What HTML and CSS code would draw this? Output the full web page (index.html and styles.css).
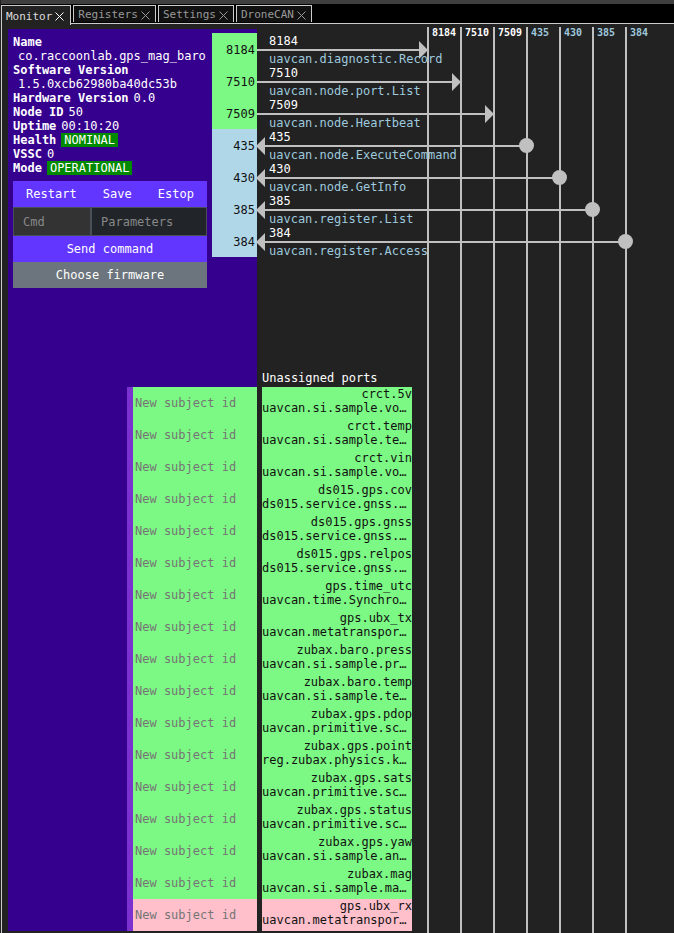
FILE: index.html
```html
<!DOCTYPE html>
<html lang="en">
<head>
<meta charset="utf-8">
<title>Monitor</title>
<link rel="stylesheet" href="styles.css">
</head>
<body>
<div class="app">
  <nav class="tabs" aria-label="Views">
    <div class="tab tab-active"><a href="#monitor">Monitor</a><button class="close" aria-label="Close Monitor"><svg viewBox="0 0 9 9"><path d="M.5 .5l8 8M8.500 .5l-8 8"/></svg></button></div>
    <div class="tab"><a href="#registers">Registers</a><button class="close" aria-label="Close Registers"><svg viewBox="0 0 9 9"><path d="M.5 .5l8 8M8.500 .5l-8 8"/></svg></button></div>
    <div class="tab"><a href="#settings">Settings</a><button class="close" aria-label="Close Settings"><svg viewBox="0 0 9 9"><path d="M.5 .5l8 8M8.500 .5l-8 8"/></svg></button></div>
    <div class="tab"><a href="#dronecan">DroneCAN</a><button class="close" aria-label="Close DroneCAN"><svg viewBox="0 0 9 9"><path d="M.5 .5l8 8M8.500 .5l-8 8"/></svg></button></div>
  </nav>
  <main class="monitor" id="monitor">
    <section class="node">
      <div class="node-top">
        <div class="details">
          <div class="info">
            <div><b>Name</b></div>
            <div><span class="value">co.raccoonlab.gps_mag_baro</span></div>
            <div><b>Software Version</b></div>
            <div><span class="value">1.5.0xcb62980ba40dc53b</span></div>
            <div><b>Hardware Version</b><span class="value">0.0</span></div>
            <div><b>Node ID</b><span class="value">50</span></div>
            <div><b>Uptime</b><span class="value">00:10:20</span></div>
            <div><b>Health</b><span class="value badge">NOMINAL</span></div>
            <div><b>VSSC</b><span class="value">0</span></div>
            <div><b>Mode</b><span class="value badge">OPERATIONAL</span></div>
          </div>
          <form class="controls">
            <div class="row"><button type="button">Restart</button><button type="button">Save</button><button type="button">Estop</button></div>
            <div class="row"><input class="cmd" aria-label="Cmd" placeholder="Cmd"><input class="params" aria-label="Parameters" placeholder="Parameters"></div>
            <button type="button">Send command</button>
            <button type="button" class="secondary">Choose firmware</button>
          </form>
        </div>
        <ul class="ports">
          <li>8184</li><li>7510</li><li>7509</li>
          <li class="service">435</li><li class="service">430</li><li class="service">385</li><li class="service">384</li>
        </ul>
      </div>
      <div class="subjects">
        <input aria-label="crct.5v" placeholder="New subject id">
        <input aria-label="crct.temp" placeholder="New subject id">
        <input aria-label="crct.vin" placeholder="New subject id">
        <input aria-label="ds015.gps.cov" placeholder="New subject id">
        <input aria-label="ds015.gps.gnss" placeholder="New subject id">
        <input aria-label="ds015.gps.relpos" placeholder="New subject id">
        <input aria-label="gps.time_utc" placeholder="New subject id">
        <input aria-label="gps.ubx_tx" placeholder="New subject id">
        <input aria-label="zubax.baro.press" placeholder="New subject id">
        <input aria-label="zubax.baro.temp" placeholder="New subject id">
        <input aria-label="zubax.gps.pdop" placeholder="New subject id">
        <input aria-label="zubax.gps.point" placeholder="New subject id">
        <input aria-label="zubax.gps.sats" placeholder="New subject id">
        <input aria-label="zubax.gps.status" placeholder="New subject id">
        <input aria-label="zubax.gps.yaw" placeholder="New subject id">
        <input aria-label="zubax.mag" placeholder="New subject id">
        <input class="sub" aria-label="gps.ubx_rx" placeholder="New subject id">
      </div>
    </section>

    <section class="links">
      <div class="link-area">
        <svg class="wires" viewBox="0 0 400 224" aria-hidden="true">
          <path class="wire" d="M0 17H164M0 49H197M0 81H230M6 113H270M6 145H303M6 177H336M6 209H369"/>
          <path class="tip" d="M162 8v18l9-9zM195 40v18l9-9zM228 72v18l9-9z"/>
          <path class="tip" d="M8 104v18l-9-9zM8 136v18l-9-9zM8 168v18l-9-9zM8 200v18l-9-9z"/>
          <circle class="tip" cx="269.5" cy="112.5" r="7.5"/><circle class="tip" cx="302.5" cy="144.5" r="7.5"/>
          <circle class="tip" cx="335.5" cy="176.5" r="7.5"/><circle class="tip" cx="368.5" cy="208.5" r="7.5"/>
        </svg>
        <ul class="link-list">
          <li>8184<span>uavcan.diagnostic.Record</span></li>
          <li>7510<span>uavcan.node.port.List</span></li>
          <li>7509<span>uavcan.node.Heartbeat</span></li>
          <li>435<span>uavcan.node.ExecuteCommand</span></li>
          <li>430<span>uavcan.node.GetInfo</span></li>
          <li>385<span>uavcan.register.List</span></li>
          <li>384<span>uavcan.register.Access</span></li>
        </ul>
      </div>
      <div class="unassigned">
        <div class="title">Unassigned ports</div>
        <ul>
          <li><span>crct.5v</span>uavcan.si.sample.vo…</li>
          <li><span>crct.temp</span>uavcan.si.sample.te…</li>
          <li><span>crct.vin</span>uavcan.si.sample.vo…</li>
          <li><span>ds015.gps.cov</span>ds015.service.gnss.…</li>
          <li><span>ds015.gps.gnss</span>ds015.service.gnss.…</li>
          <li><span>ds015.gps.relpos</span>ds015.service.gnss.…</li>
          <li><span>gps.time_utc</span>uavcan.time.Synchro…</li>
          <li><span>gps.ubx_tx</span>uavcan.metatranspor…</li>
          <li><span>zubax.baro.press</span>uavcan.si.sample.pr…</li>
          <li><span>zubax.baro.temp</span>uavcan.si.sample.te…</li>
          <li><span>zubax.gps.pdop</span>uavcan.primitive.sc…</li>
          <li><span>zubax.gps.point</span>reg.zubax.physics.k…</li>
          <li><span>zubax.gps.sats</span>uavcan.primitive.sc…</li>
          <li><span>zubax.gps.status</span>uavcan.primitive.sc…</li>
          <li><span>zubax.gps.yaw</span>uavcan.si.sample.an…</li>
          <li><span>zubax.mag</span>uavcan.si.sample.ma…</li>
          <li class="sub"><span>gps.ubx_rx</span>uavcan.metatranspor…</li>
        </ul>
      </div>
    </section>

    <ul class="tracks">
      <li>8184</li><li>7510</li><li>7509</li>
      <li class="service">435</li><li class="service">430</li><li class="service">385</li><li class="service">384</li>
    </ul>
  </main>
</div>
</body>
</html>
```
FILE: styles.css
```css
:root {
  --line: #c0c0c0;
  --frame: #cccccc;
  --green: #7cf884;
  --blue: #b0d7e8;
  --pink: #ffc0cb;
}
* { box-sizing: border-box; }
body {
  margin: 0;
  background: #222;
  color: #fff;
  font: 12px/14px "DejaVu Sans Mono", monospace;
}
ul { list-style: none; margin: 0; padding: 0; }
input, button {
  font: inherit;
  color: inherit;
  border: 0;
  border-radius: 0;
  margin: 0;
  min-width: 0;
}
.app {
  min-height: 100vh;
  margin-left: 1px;
  border-top: 4px solid #3f3f3f;
  display: flex;
  flex-direction: column;
}

/* tab strip */
.tabs {
  display: flex;
  gap: 2px;
  height: 20px;
  padding-top: 1px;
  background: #000;
  border-bottom: 1px solid var(--frame);
}
.tab {
  display: flex;
  align-items: center;
  gap: 3px;
  height: 17px;
  padding: 1px 5px 0 4px;
  border: 1px solid var(--frame);
  border-bottom: 0;
  background: #111;
  color: #999;
  font-size: 11px;
}
.tab a { color: inherit; text-decoration: none; }
.tab-active {
  height: 20px;
  padding: 2px 6px 0 4px;
  background: #222;
  color: #ddd;
}
.close { display: flex; padding: 2px 0 0; background: none; }
.tab-active .close { padding: 0; color: #fff; }
.close svg { width: 9px; height: 9px; }
.close path { stroke: currentColor; fill: none; }

/* three columns: node, links, bus tracks */
.monitor {
  flex: 1;
  display: grid;
  grid-template-columns: 255px 170px 1fr;
  border-left: 1px solid var(--frame);
}
.node {
  display: flex;
  flex-direction: column;
  justify-content: space-between;
  margin: 5px 0 2px 6px;
  background: #36008f;
}
.node-top { display: flex; justify-content: space-between; }
.details { padding: 6px 0 0 5px; width: 199px; }
.info { white-space: nowrap; }
.value { margin-left: 5px; }
.badge { padding: 0 3px; background: #008a00; }
.controls { margin-top: 6px; display: flex; flex-direction: column; }
.row { display: flex; }
.controls button {
  height: 26px;
  padding: 0 12px;
  background: #6236ff;
}
.row button { flex: 1 0 auto; }
.controls .secondary { background: #6c757d; }
.controls input {
  height: 29px;
  padding: 0 9px;
  border: 1px solid #495057;
  background: #212529;
}
.controls .cmd { width: 78px; background: #333; }
.controls .params { flex: 1; }
.controls input::placeholder { color: #888; }
.ports { width: 45px; margin-top: 4px; color: #111; text-align: right; }
.ports li {
  height: 32px;
  padding-right: 2px;
  line-height: 34px;
  background: var(--green);
}
.ports .service { background: var(--blue); }

.subjects {
  align-self: flex-end;
  width: 130px;
  display: flex;
  flex-direction: column;
  border-left: 6px solid #7b30d0;
}
.subjects input { width: 100%; height: 32px; padding: 0 2px; background: var(--green); color: #111; }
.subjects input::placeholder { color: #757575; }
.subjects .sub, .unassigned .sub { background: var(--pink); }

/* links between node ports and tracks */
.links {
  position: relative;
  z-index: 1;
  padding: 9px 0 2px;
  display: flex;
  flex-direction: column;
  justify-content: space-between;
}
.link-area { position: relative; margin-bottom: 114px; }
.wires { position: absolute; left: 0; top: 0; width: 400px; height: 224px; overflow: visible; }
.wire { stroke: var(--line); stroke-width: 2; fill: none; }
.tip { fill: var(--line); }
.link-list { position: relative; margin-left: 12px; white-space: nowrap; }
.link-list li { height: 32px; line-height: 17px; }
.link-list span { display: block; line-height: 18px; color: #9fc9de; }
.unassigned { width: 150px; margin-left: 5px; }
.title { height: 16px; }
.unassigned li {
  height: 32px;
  background: var(--green);
  color: #111;
  white-space: nowrap;
}
.unassigned li span { display: block; text-align: right; }

.tracks { display: flex; padding-top: 3px; font-size: 10px; font-weight: bold; line-height: 12px; }
.tracks li { width: 33px; padding-left: 3px; border-left: 2px solid var(--line); }
.tracks .service { color: #9fc9de; }
```
